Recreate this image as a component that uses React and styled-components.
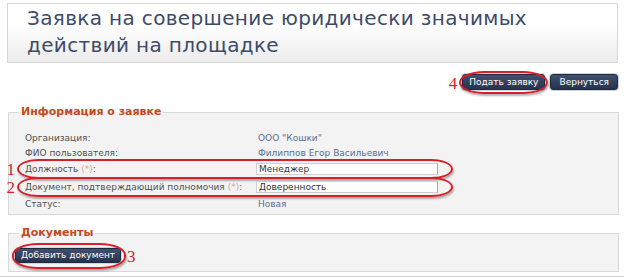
import React from 'react';
import styled, { createGlobalStyle } from 'styled-components';

const Global = createGlobalStyle`
  html, body { margin: 0; padding: 0; background: #ffffff; }
  body {
    font-family: "DejaVu Sans", Verdana, sans-serif;
    width: 624px;
    height: 278px;
    overflow: hidden;
  }
`;

const Page = styled.div`
  box-sizing: border-box;
  height: 277px;
  padding: 3px 6px 0 7px;
  border-bottom: 1px solid #d2d2d2;
`;

const Header = styled.div`
  box-sizing: border-box;
  height: 60px;
  border: 1px solid #d6d6d6;
  background: linear-gradient(#ffffff 35%, #ececec);
  padding: 1px 0 0 19px;
`;

const Title = styled.h1`
  margin: 0;
  font-weight: normal;
  font-size: 20px;
  letter-spacing: 0.35px;
  line-height: 27px;
  color: #3c4b69;
`;

const Toolbar = styled.div`
  display: flex;
  justify-content: flex-end;
  align-items: center;
  gap: 5px;
  margin-top: 11px;
  padding-right: 0;
`;

const Button = styled.button`
  box-sizing: border-box;
  height: ${p => p.$h || 16}px;
  padding: 0 ${p => p.$px || 6}px;
  border: 1px solid #1e2940;
  border-radius: 3px;
  background: linear-gradient(#40506f, #26334d);
  color: #ffffff;
  font-family: "DejaVu Sans", Verdana, sans-serif;
  font-size: 9px;
  line-height: 1;
  cursor: pointer;
  box-shadow: 0 0 0 1px #d3d7df;
`;

const Marked = styled.div`
  position: relative;
  display: flex;
`;

const Ring = styled.span`
  position: absolute;
  top: ${p => p.$t}px;
  bottom: ${p => p.$b}px;
  left: ${p => p.$l}px;
  right: ${p => p.$r}px;
  border: 2px solid #d8202a;
  border-radius: 26px / 12px;
  box-shadow: 1px 2px 2px rgba(0, 0, 0, 0.3);
  pointer-events: none;
`;

const Num = styled.span`
  position: absolute;
  top: 50%;
  transform: translateY(-50%);
  ${p => (p.$side === 'right' ? `left: calc(100% + ${p.$off}px);` : `right: calc(100% + ${p.$off}px);`)}
  font-family: "Liberation Serif", "Times New Roman", serif;
  font-size: 17px;
  line-height: 15px;
  color: #d8202a;
`;

const Fieldset = styled.fieldset`
  margin: ${p => p.$mt}px -1px 0 1px;
  padding: ${p => p.$pt}px 6px ${p => p.$pb}px 6px;
  border: 1px solid #d9d9d9;
  background: #f3f3f3;
  min-width: 0;
`;

const Legend = styled.legend`
  margin-left: 4px;
  padding: 0 2px;
  font-size: 11px;
  font-weight: bold;
  line-height: 16px;
  color: #c4491b;
`;

const Rows = styled.div`
  padding-left: 10px;
`;

const Row = styled.div`
  position: relative;
  display: grid;
  grid-template-columns: 233px 1fr;
  align-items: center;
  height: ${p => (p.$tall ? 18 : 15)}px;
  font-size: 9px;
  white-space: nowrap;
`;

const Label = styled.span`
  color: #505050;
`;

const Req = styled.span`
  color: #d2a3a3;
`;

const Value = styled.span`
  color: #5b6d93;
`;

const Field = styled.input`
  box-sizing: border-box;
  width: 182px;
  height: 12px;
  margin-left: -2px;
  padding: 0 2px;
  border: 1px solid #d0d0d0;
  border-right-color: #a9a9a9;
  background: #ffffff;
  font-family: "DejaVu Sans", Verdana, sans-serif;
  font-size: 9px;
  color: #333333;
  outline: none;
`;

const RowRing = styled(Ring)`
  left: -8px;
  width: 432px;
  right: auto;
`;

const Docs = styled.div`
  display: flex;
`;

export default function App() {
  return (
    <>
      <Global />
      <Page>
        <Header>
          <Title>
            Заявка на совершение юридически значимых
            <br />
            действий на площадке
          </Title>
        </Header>

        <Toolbar>
          <Marked>
            <Button $px={6}>Подать заявку</Button>
            <Ring $t={-3} $b={-4} $l={-3} $r={-3}>
              <Num $off={4}>4</Num>
            </Ring>
          </Marked>
          <Button $px={8}>Вернуться</Button>
        </Toolbar>

        <Fieldset $mt={14} $pt={10} $pb={3}>
          <Legend>Информация о заявке</Legend>
          <Rows>
            <Row>
              <Label>Организация:</Label>
              <Value>ООО "Кошки"</Value>
            </Row>
            <Row>
              <Label>ФИО пользователя:</Label>
              <Value>Филиппов Егор Васильевич</Value>
            </Row>
            <Row $tall>
              <Label>
                Должность <Req>(*)</Req>:
              </Label>
              <Field readOnly defaultValue="Менеджер" />
              <RowRing $t={-1} $b={-1}>
                <Num $off={4}>1</Num>
              </RowRing>
            </Row>
            <Row $tall>
              <Label>
                Документ, подтверждающий полномочия <Req>(*)</Req>:
              </Label>
              <Field readOnly defaultValue="Доверенность" />
              <RowRing $t={-1} $b={-1}>
                <Num $off={4}>2</Num>
              </RowRing>
            </Row>
            <Row>
              <Label>Статус:</Label>
              <Value>Новая</Value>
            </Row>
          </Rows>
        </Fieldset>

        <Fieldset $mt={10} $pt={7} $pb={8}>
          <Legend>Документы</Legend>
          <Docs>
            <Marked>
              <Button $h={15} $px={5}>Добавить документ</Button>
              <Ring $t={-5} $b={-6} $l={-3} $r={-5}>
                <Num $side="right" $off={3}>3</Num>
              </Ring>
            </Marked>
          </Docs>
        </Fieldset>
      </Page>
    </>
  );
}
